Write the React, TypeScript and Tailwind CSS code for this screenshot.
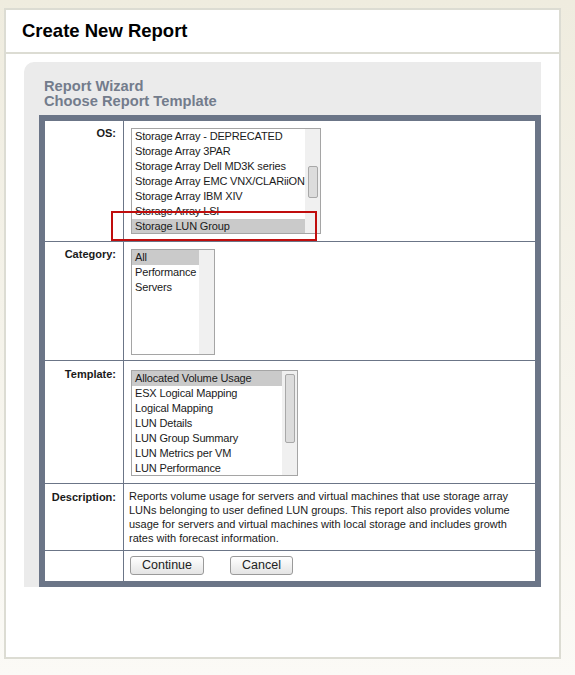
import React from 'react';

type ListProps = {
  items: string[];
  selected: number;
  width: string;
  thumb?: string; // classes for the thumb, if the list scrolls
};

// plain windows-style listbox with a fake scrollbar
function ListBox({ items, selected, width, thumb }: ListProps) {
  return (
    <div className={`${width} h-[106px] border border-[#a5a5a5] bg-white flex overflow-hidden`}>
      <div className="flex-1 flex flex-col">
        {items.map((it, i) => (
          <div
            key={it}
            className={`h-[15px] shrink-0 pl-[3px] leading-[15px] whitespace-nowrap text-[11px] tracking-[-0.15px] text-[#1a1a1a] ${
              i === selected ? 'bg-[#cacaca]' : ''
            }`}
          >
            {it}
          </div>
        ))}
      </div>
      <div className="w-[15px] bg-[#f0f0f0] flex justify-center">
        {thumb && <div className={`w-[10px] rounded-[2px] border border-[#a8a8a8] bg-[#dcdcdc] ${thumb}`} />}
      </div>
    </div>
  );
}

const osItems = [
  'Storage Array - DEPRECATED',
  'Storage Array 3PAR',
  'Storage Array Dell MD3K series',
  'Storage Array EMC VNX/CLARiiON',
  'Storage Array IBM XIV',
  'Storage Array LSI',
  'Storage LUN Group',
];

const categoryItems = ['All', 'Performance', 'Servers'];

const templateItems = [
  'Allocated Volume Usage',
  'ESX Logical Mapping',
  'Logical Mapping',
  'LUN Details',
  'LUN Group Summary',
  'LUN Metrics per VM',
  'LUN Performance',
];

function Button({ label, width }: { label: string; width: string }) {
  return (
    <button
      className={`${width} h-[19px] rounded-[3px] border border-[#9a9a9a] bg-gradient-to-b from-white to-[#e4e4e4] text-[12.5px] leading-[17px] text-[#222]`}
    >
      {label}
    </button>
  );
}

export default function App() {
  return (
    <div
      className="min-h-[675px] w-[575px] bg-gradient-to-b from-[#efecdf] to-[#fbfaf6] pt-[8px] pl-[4px]"
      style={{ fontFamily: '"Liberation Sans", Arial, sans-serif' }}
    >
      <div className="w-[557px] h-[651px] border-2 border-[#dcdcd3] bg-white">
        {/* header */}
        <div className="h-[44px] border-b-2 border-[#dcdcd3] pl-[16px] flex items-center">
          <h1 className="text-[18.5px] font-bold text-black">Create New Report</h1>
        </div>

        {/* wizard box */}
        <div className="ml-[18px] mt-[8px] w-[517px] bg-[#ebebeb] rounded-tl-[10px] pt-[17px]">
          <div className="pl-[20px] text-[14.7px] font-bold leading-[15px] text-[#737c8c]">
            <div>Report Wizard</div>
            <div>Choose Report Template</div>
          </div>

          <div className="ml-[15px] mt-[6px] border-[6px] border-[#6b7587] bg-white text-[11px] text-[#1a1a1a]">
            {/* OS */}
            <div className="flex h-[121px] border-b border-[#6b7587]">
              <div className="w-[79px] border-r border-[#6b7587] text-right pr-[7px] pt-[4px] font-bold">OS:</div>
              <div className="relative flex-1 pl-[7px] pt-[7px]">
                <ListBox items={osItems} selected={6} width="w-[190px]" thumb="mt-[37px] h-[32px]" />
                <div className="absolute left-[-13px] top-[90px] w-[206px] h-[30px] border-2 border-[#c00d0d]" />
              </div>
            </div>

            {/* Category */}
            <div className="flex h-[119px] border-b border-[#6b7587]">
              <div className="w-[79px] border-r border-[#6b7587] text-right pr-[7px] pt-[4px] font-bold">Category:</div>
              <div className="flex-1 pl-[7px] pt-[7px]">
                <ListBox items={categoryItems} selected={0} width="w-[84px]" />
              </div>
            </div>

            {/* Template */}
            <div className="flex h-[123px] border-b border-[#6b7587]">
              <div className="w-[79px] border-r border-[#6b7587] text-right pr-[7px] pt-[5px] font-bold">Template:</div>
              <div className="flex-1 pl-[7px] pt-[9px]">
                <ListBox items={templateItems} selected={0} width="w-[167px]" thumb="mt-[3px] h-[69px]" />
              </div>
            </div>

            {/* Description */}
            <div className="flex h-[67px] border-b border-[#6b7587]">
              <div className="w-[79px] border-r border-[#6b7587] text-right pr-[7px] pt-[5px] font-bold">Description:</div>
              <div className="flex-1 pl-[5px] pr-[8px] pt-[5px] leading-[14px]">
                Reports volume usage for servers and virtual machines that use storage array LUNs belonging to user
                defined LUN groups. This report also provides volume usage for servers and virtual machines with local
                storage and includes growth rates with forecast information.
              </div>
            </div>

            {/* buttons */}
            <div className="flex h-[30px]">
              <div className="w-[79px] border-r border-[#6b7587]" />
              <div className="flex-1 pl-[6px] pt-[5px] flex gap-[26px] items-start">
                <Button label="Continue" width="w-[74px]" />
                <Button label="Cancel" width="w-[63px]" />
              </div>
            </div>
          </div>
        </div>
      </div>
    </div>
  );
}
